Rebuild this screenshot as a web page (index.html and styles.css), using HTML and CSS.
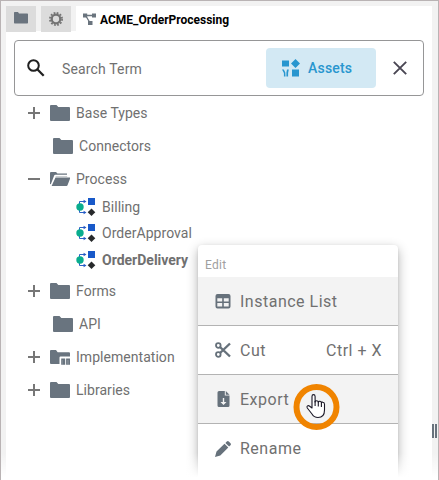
FILE: index.html
```html
<!DOCTYPE html>
<html lang="en">
<head>
<meta charset="utf-8">
<title>ACME_OrderProcessing</title>
<link rel="stylesheet" href="styles.css">
</head>
<body>
<svg class="defs" aria-hidden="true">
  <symbol id="folder" viewBox="0 0 20 16"><path d="M1 0h5.500l1.800 2H19q1 0 1 1v12q0 1-1 1H1q-1 0-1-1V1q0-1 1-1z"/></symbol>
  <symbol id="folder-open" viewBox="0 0 20 16"><path d="M0 13V2q0-1 1-1h5l1.500 1.500H17v1.200H5.300Q4.600 3.700 4.300 4.300L0.800 13.300z"/><path d="M5.800 5h11.400v.8H5.500z" opacity=".45"/><path d="M5.500 6.500H20q.4 0 .2.600l-2.600 7q-.3.900-1.100.900H1.600z"/></symbol>
  <symbol id="folder-lib" viewBox="0 0 20 16"><path d="M1 1h5l1.700 2.300H19q1 0 1 1v3.200H10.500Q9.500 7.500 9.500 8.500V15H1q-1 0-1-1V2q0-1 1-1z"/><path d="M11.200 9.500h4v6.300h-1.300V11h-1.200v4.800h-1.500zM16.100 9.500H20v6.300h-1.300V11h-1.200v4.800h-1.400z"/><path d="M12.500 10.800h1.600v5h-1.600zM17.300 10.800h1.500v5h-1.500z"/></symbol>
  <symbol id="flow" viewBox="0 0 20 18"><path d="M3.500 9V3.500H8M3.500 9v5.500H8" fill="none" stroke="#2961c6"/><path d="M7.600 1.800 10.500 3.500 7.600 5.200zM7.600 12.800l2.900 1.700-2.900 1.700z" fill="#2459c4"/><circle cx="4" cy="9" r="3.700" fill="#09ad8e"/><path d="M12 0h7v7h-7z" fill="#1859c9"/><path d="m15.500 10.500 3.800 3.800-3.800 3.700-3.800-3.700z" fill="#27292b"/></symbol>
</svg>
<main class="app">
  <nav class="tabs">
    <span class="tab"><svg class="tab-folder" viewBox="0 0 14 12"><path d="M.7 0H4l1 1.500h8.300q.7 0 .7.700v8.600q0 .7-.7.700H.7q-.7 0-.7-.7V.7Q0 0 .7 0z"/></svg></span>
    <span class="tab"><svg class="gear" viewBox="0 0 14 14"><circle cx="7" cy="7" r="4.300" fill="none" stroke="currentColor" stroke-width="2.300"/><circle cx="7" cy="7" r="6.100" fill="none" stroke="currentColor" stroke-width="1.700" stroke-dasharray="1.800 1.394"/></svg></span>
    <span class="tab active"><svg class="model" viewBox="0 0 13 12"><path d="M0 .5h4.200v4H0zM9 .5h4v4H9zM5 8h4.500v4H5z"/><path d="M3.500 2.500H10M3.200 3.500 6.500 9" fill="none" stroke="currentColor" stroke-width="1.300"/></svg><b>ACME_OrderProcessing</b></span>
  </nav>
  <section class="panel">
    <div class="search">
      <svg class="lens" viewBox="0 0 18 18"><circle cx="6.500" cy="6.500" r="5.300" fill="none" stroke="currentColor" stroke-width="2"/><path d="m10.500 10.500 6.200 6.200" stroke="currentColor" stroke-width="2.300"/></svg>
      <span class="placeholder">Search Term</span>
      <span class="assets"><svg viewBox="0 0 18 18"><path d="M0 1.500h7v6H0zM10 10.500h7v7h-7zM13.500 0 18 4.500 13.500 9 9 4.500z"/><path d="M0 10.500h1.800l1.500 3 .2 4H1.900v-3.600zM5 10.500h1.800l-.7 3.400v3.600H4.400v-4z"/></svg>Assets</span>
      <svg class="close" viewBox="0 0 14 14"><path d="m.8.800 12.400 12.400M13.200.8.800 13.200" stroke="currentColor" stroke-width="1.900"/></svg>
    </div>
    <ul class="tree">
      <li><i class="toggle plus"></i><svg class="fold"><use href="#folder"/></svg><span>Base Types</span></li>
      <li class="leaf"><svg class="fold"><use href="#folder"/></svg><span>Connectors</span></li>
      <li><i class="toggle"></i><svg class="fold"><use href="#folder-open"/></svg><span>Process</span></li>
      <li class="child first"><svg class="flow"><use href="#flow"/></svg><span>Billing</span></li>
      <li class="child"><svg class="flow"><use href="#flow"/></svg><span>OrderApproval</span></li>
      <li class="child last"><svg class="flow"><use href="#flow"/></svg><b>OrderDelivery</b></li>
      <li><i class="toggle plus"></i><svg class="fold"><use href="#folder"/></svg><span>Forms</span></li>
      <li class="leaf"><svg class="fold"><use href="#folder"/></svg><span>API</span></li>
      <li><i class="toggle plus"></i><svg class="fold"><use href="#folder-lib"/></svg><span>Implementation</span></li>
      <li><i class="toggle plus"></i><svg class="fold"><use href="#folder"/></svg><span>Libraries</span></li>
    </ul>
  </section>
  <div class="menu">
    <div class="menu-title">Edit</div>
    <div class="item shade"><svg viewBox="0 0 16 16"><path fill-rule="evenodd" d="M2.500 1h11Q15.500 1 15.500 3v10.500q0 2-2 2h-11q-2 0-2-2V3q0-2 2-2zM2.300 5.200v3.200h4.900V5.200zM8.800 5.200v3.200h4.900V5.200zM2.300 10v3.500h4.900V10zM8.800 10v3.500h4.900V10z"/></svg><span>Instance List</span></div>
    <div class="item"><svg viewBox="0 0 16 16"><g fill="none" stroke="currentColor"><circle cx="3.300" cy="3.500" r="2.300" stroke-width="1.800"/><circle cx="3.300" cy="12.500" r="2.300" stroke-width="1.800"/><path d="m5 11 10-9.500M5 5l10 9.500" stroke-width="2.400"/></g></svg><span>Cut</span><span class="key">Ctrl + X</span></div>
    <div class="item shade"><svg viewBox="0 0 16 16"><path fill-rule="evenodd" d="M4 0h5.800v4.500h4.700V14.500Q14.500 16 13 16H4q-1.500 0-1.500-1.500v-13Q2.500 0 4 0zM7.800 7v4H5.500l3 3 3-3H9.200V7z"/><path d="m10.800 0 3.700 3.700h-3.700z"/></svg><span>Export</span></div>
    <div class="item"><svg viewBox="0 0 16 16"><path d="m1.500 10.500 8-7.800 3.800 3.800-8 7.900L0 16zM10.400 1.900 11.800.5q1-.9 2 0l1.700 1.700q.9 1 0 2l-1.400 1.400z"/></svg><span>Rename</span></div>
  </div>
  <svg class="pointer" viewBox="0 0 47 46"><circle cx="23.500" cy="23" r="20" fill="none" stroke="#f08400" stroke-width="6"/><path d="M19 24V12.500q0-1.900 1.500-1.900t1.600 1.900V18q0-1.300 1.500-1.300t1.700 1.500q.1-1 1.600-.9t1.500 1.500q.2-.8 1.500-.6 1.600.1 1.600 2V26q0 7.500-6.500 7.500-4 0-6-3.500L14.300 24q-.8-1.300.2-2.100 1.100-.8 2.200.4z" fill="#fff" stroke="#1a1726" stroke-width="1.100" stroke-linejoin="round"/><path d="M22.100 17v5M25.300 18v4.500M28.400 18.500V23" stroke="#1a1726" stroke-width="1.100"/></svg>
  <div class="fade"></div>
  <div class="grip"></div>
</main>
</body>
</html>
```
FILE: styles.css
```css
* { box-sizing: border-box; }
body { margin: 0; font-family: Roboto, "Liberation Sans", sans-serif; color: #707070; background: #fff; }
svg { fill: currentColor; flex: none; }
.defs { position: absolute; width: 0; height: 0; }
.app { position: relative; width: 439px; height: 480px; overflow: hidden; border: 1px solid #b9b3b4; border-bottom: 0; background: #f2f2f2; padding: 5px 6px 0 5px; display: flex; flex-direction: column; }
.tabs { display: flex; height: 25px; gap: 5px; flex: none; }
.tab { width: 30px; height: 26px; background: #dcdcdc; display: flex; align-items: center; justify-content: center; color: #6a747e; z-index: 1; }
.tab.active { flex: 1; background: #fff; justify-content: flex-start; padding-left: 7px; gap: 4px; }
.tab b { color: #000; font-size: 12px; font-weight: 700; white-space: nowrap; padding-top: 2px; }
.tab-folder { width: 14px; height: 12px; margin-top: -2px; }
.gear { width: 14px; height: 14px; color: #737373; }
.model { width: 13px; height: 12px; }
.panel { flex: 1; background: #fff; padding: 9px 8px 0; }
.search { height: 56px; border: 1px solid #969697; border-radius: 4px; display: flex; align-items: center; padding: 0 16px 0 12px; }
.lens { width: 18px; height: 18px; color: #202020; }
.placeholder { margin-left: 17px; font-size: 14px; letter-spacing: .15px; margin-top: 2px; color: #707070; }
.assets { width: 110px; height: 40px; margin-left: auto; border-radius: 4px; background: #d3e9f4; color: #2896cf; display: flex; align-items: center; padding-left: 16px; gap: 8px; font-size: 14px; font-weight: 500; letter-spacing: .2px; }
.assets svg { width: 18px; height: 18px; }
.close { width: 14px; height: 14px; margin-left: 17px; color: #494653; }
.tree { list-style: none; margin: 0; padding: 0 0 0 14px; font-size: 14px; letter-spacing: .04px; }
.tree li { height: 33px; display: flex; align-items: center; white-space: nowrap; }
.tree .leaf { padding-left: 25px; }
.tree .leaf span { margin-left: 6px; }
.tree .child { height: 29px; padding-left: 48px; }
.tree .first { height: 23px; }
.tree .last { height: 27px; padding-bottom: 2px; }
.tree b { font-weight: 700; letter-spacing: 0; }
.toggle { width: 12px; height: 12px; margin-right: 10px; background: linear-gradient(#777, #777) 0 5px / 12px 2px no-repeat; }
.plus { background: linear-gradient(#777, #777) 0 5px / 12px 2px no-repeat, linear-gradient(#777, #777) 5px 0 / 2px 12px no-repeat; }
.fold { width: 20px; height: 16px; margin-right: 6px; color: #69747f; }
.leaf .fold { margin-right: 0; }
.flow { width: 20px; height: 18px; margin-right: 6px; }
.menu { position: absolute; left: 197px; top: 244px; width: 200px; height: 240px; background: #fff; border-radius: 4px 4px 0 0; box-shadow: 0 4px 12px rgba(0,0,0,.3), 0 1px 3px rgba(0,0,0,.1); }
.menu-title { height: 32px; padding: 12px 7px 0; font-size: 12px; line-height: 16px; letter-spacing: .3px; color: #a0a0a0; }
.item { height: 49px; display: flex; align-items: center; padding: 0 16px 0 17px; border-bottom: 1px solid #b3b3b3; font-size: 16px; letter-spacing: .5px; white-space: nowrap; }
.item:last-child { border: 0; }
.item svg { width: 16px; height: 16px; margin-right: 9px; color: #66717b; }
.shade { background: #f3f3f3; }
.key { margin-left: auto; }
.pointer { position: absolute; left: 292px; top: 383px; width: 47px; height: 46px; }
.fade { position: absolute; left: -1px; right: -1px; bottom: 0; height: 27px; background: linear-gradient(rgba(255,255,255,0), #fff 90%); clip-path: polygon(0 0, 198px 0, 198px 100%, 398px 100%, 398px 0, 100% 0, 100% 100%, 0 100%); }
.grip { position: absolute; right: 1px; top: 423px; width: 5px; height: 14px; background: linear-gradient(90deg, #68737d 0 2px, #f2f2f2 2px 3px, #68737d 3px); }
```
